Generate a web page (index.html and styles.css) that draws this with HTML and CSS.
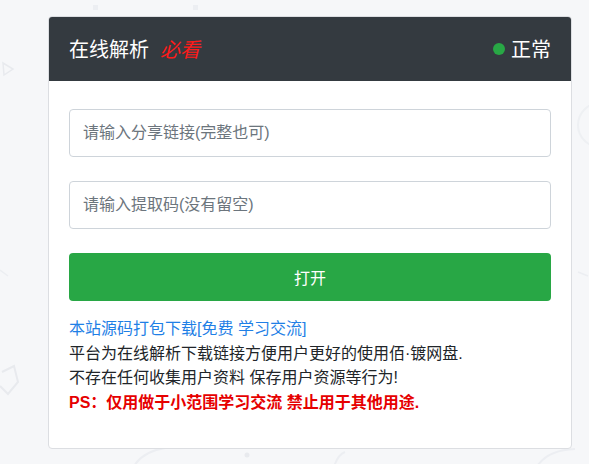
FILE: index.html
```html
<!DOCTYPE html>
<html lang="zh-CN">
<head>
<meta charset="utf-8">
<title>在线解析</title>
<link rel="stylesheet" href="styles.css">
</head>
<body>
<svg class="bg" width="589" height="464" viewBox="0 0 589 464" aria-hidden="true">
  <rect x="93" y="5" width="5" height="5" fill="#eceef2"/>
  <rect x="193" y="5" width="5" height="5" fill="#eceef2"/>
  <path d="M3 63 L13 69 L4 75 Z" fill="none" stroke="#e8eaee" stroke-width="1.5"/>
  <path d="M2 372 L14 366 L18 382 L8 394 L0 386" fill="none" stroke="#e8eaee" stroke-width="2"/>
  <circle cx="600" cy="125" r="22" fill="none" stroke="#eef0f3" stroke-width="2"/>
  <path d="M578 272 L588 276" stroke="#eceef2" stroke-width="1.5"/>
  <path d="M0 270 L8 276" stroke="#eceef2" stroke-width="1.5"/>
  <path d="M132 470 Q140 452 165 448" fill="none" stroke="#eceef2" stroke-width="2"/>
  <circle cx="247" cy="455" r="2.5" fill="#e8eaee"/>
  <path d="M333 470 Q337 455 345 452" fill="none" stroke="#eceef2" stroke-width="2"/>
  <path d="M535 470 Q545 450 575 449" fill="none" stroke="#eceef2" stroke-width="2"/>
</svg>
<div class="card">
  <div class="card-header">
    <div class="title">在线解析<span class="must">必看</span></div>
    <div class="status"><span class="dot"></span>正常</div>
  </div>
  <div class="card-body">
    <input class="field" type="text" placeholder="请输入分享链接(完整也可)">
    <input class="field" type="text" placeholder="请输入提取码(没有留空)">
    <button class="btn" type="button">打开</button>
    <div class="info">
      <a class="link" href="#">本站源码打包下载[免费 学习交流]</a>
      <p>平台为在线解析下载链接方便用户更好的使用佰·镀网盘.</p>
      <p>不存在任何收集用户资料 保存用户资源等行为!</p>
      <p class="ps">PS：仅用做于小范围学习交流 禁止用于其他用途.</p>
    </div>
  </div>
</div>
</body>
</html>
```
FILE: styles.css
```css
html, body {
  margin: 0;
  padding: 0;
}
body {
  width: 589px;
  height: 464px;
  overflow: hidden;
  background: #f6f7f9;
  font-family: "Liberation Sans", "Noto Sans CJK SC", sans-serif;
  color: #212529;
  position: relative;
}
.bg {
  position: absolute;
  left: 0;
  top: 0;
  z-index: 0;
}
.card {
  position: relative;
  z-index: 1;
  margin: 16px 0 0 48px;
  width: 524px;
  height: 433px;
  box-sizing: border-box;
  background: #fff;
  border: 1px solid #dcdee2;
  border-radius: 4px;
  overflow: hidden;
}
.card-header {
  margin: -1px -1px 0 -1px;
  height: 65px;
  background: #343a40;
  color: #fff;
  display: flex;
  align-items: center;
  justify-content: space-between;
  padding: 0 21px 0 21px;
  font-size: 20px;
  border-radius: 4px 4px 0 0;
}
.title {
  display: flex;
  align-items: center;
}
.must {
  color: #ff1a1a;
  font-style: italic;
  margin-left: 11px;
}
.status {
  display: flex;
  align-items: center;
}
.dot {
  width: 12px;
  height: 12px;
  border-radius: 50%;
  background: #28a745;
  margin-right: 6px;
}
.card-body {
  padding: 28px 20px 20px 20px;
  display: flex;
  flex-direction: column;
}
.field {
  display: block;
  width: 100%;
  height: 48px;
  box-sizing: border-box;
  border: 1px solid #ced4da;
  border-radius: 4px;
  padding: 0 13px;
  font-family: inherit;
  font-size: 16px;
  color: #495057;
  margin: 0 0 24px 0;
  outline: none;
}
.field::placeholder {
  color: #6c757d;
}
.btn {
  display: block;
  width: 100%;
  height: 48px;
  border: none;
  border-radius: 4px;
  background: #28a745;
  color: #fff;
  font-family: inherit;
  font-size: 16px;
  margin: 0 0 16px 0;
  cursor: pointer;
}
.info {
  font-size: 16px;
  line-height: 24.5px;
}
.info p {
  margin: 0;
}
.link {
  display: block;
  color: #1f7fe6;
  text-decoration: none;
}
.ps {
  color: #e60000;
  font-weight: bold;
}
```
